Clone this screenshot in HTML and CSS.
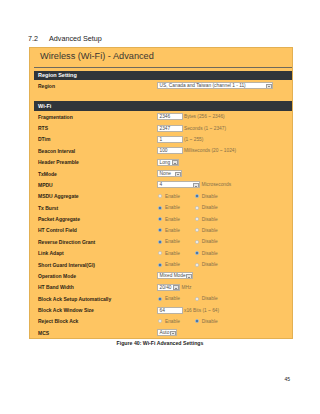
FILE: index.html
```html
<!DOCTYPE html>
<html lang="en">
<head>
    <meta charset="UTF-8">
    <meta name="viewport" content="width=device-width, initial-scale=1.0">
    <title>Advanced Setup</title>
    <link rel="stylesheet" href="styles.css">
</head>
<body>
    <div class="page">
        <h2 class="section"><span class="num">7.2</span>Advanced Setup</h2>

        <div class="panel">
            <div class="panel-title">Wireless (Wi-Fi) - Advanced</div>

            <!-- Region -->
            <div class="bar">Region Setting</div>
            <div class="row">
                <div class="label">Region</div>
                <div class="ctrl"><span class="select w-region">US, Canada and Taiwan (channel 1 - 11)<i class="arrow"></i></span></div>
            </div>

            <!-- Wi-Fi -->
            <div class="bar wifi">Wi-Fi</div>
            <div class="row">
                <div class="label">Fragmentation</div>
                <div class="ctrl"><span class="field">2346</span><span class="hint">Bytes (256 ~ 2346)</span></div>
            </div>
            <div class="row">
                <div class="label">RTS</div>
                <div class="ctrl"><span class="field">2347</span><span class="hint">Seconds (1 ~ 2347)</span></div>
            </div>
            <div class="row">
                <div class="label">DTim</div>
                <div class="ctrl"><span class="field">1</span><span class="hint">(1 ~ 255)</span></div>
            </div>
            <div class="row">
                <div class="label">Beacon Interval</div>
                <div class="ctrl"><span class="field">100</span><span class="hint">Milliseconds (20 ~ 1024)</span></div>
            </div>
            <div class="row">
                <div class="label">Header Preamble</div>
                <div class="ctrl"><span class="select w-long">Long<i class="arrow"></i></span></div>
            </div>
            <div class="row">
                <div class="label">TxMode</div>
                <div class="ctrl"><span class="select w-none">None<i class="arrow"></i></span></div>
            </div>
            <div class="row">
                <div class="label">MPDU</div>
                <div class="ctrl"><span class="select w-mpdu">4<i class="arrow"></i></span><span class="hint">Microseconds</span></div>
            </div>
            <div class="row">
                <div class="label">MSDU Aggregate</div>
                <div class="ctrl"><span class="opt"><i class="radio"></i>Enable</span><span class="opt"><i class="radio on"></i>Disable</span></div>
            </div>
            <div class="row">
                <div class="label">Tx Burst</div>
                <div class="ctrl"><span class="opt"><i class="radio on"></i>Enable</span><span class="opt"><i class="radio"></i>Disable</span></div>
            </div>
            <div class="row">
                <div class="label">Packet Aggregate</div>
                <div class="ctrl"><span class="opt"><i class="radio on"></i>Enable</span><span class="opt"><i class="radio"></i>Disable</span></div>
            </div>
            <div class="row">
                <div class="label">HT Control Field</div>
                <div class="ctrl"><span class="opt"><i class="radio on"></i>Enable</span><span class="opt"><i class="radio"></i>Disable</span></div>
            </div>
            <div class="row">
                <div class="label">Reverse Direction Grant</div>
                <div class="ctrl"><span class="opt"><i class="radio on"></i>Enable</span><span class="opt"><i class="radio"></i>Disable</span></div>
            </div>
            <div class="row">
                <div class="label">Link Adapt</div>
                <div class="ctrl"><span class="opt"><i class="radio"></i>Enable</span><span class="opt"><i class="radio on"></i>Disable</span></div>
            </div>
            <div class="row">
                <div class="label">Short Guard Interval(GI)</div>
                <div class="ctrl"><span class="opt"><i class="radio on"></i>Enable</span><span class="opt"><i class="radio"></i>Disable</span></div>
            </div>
            <div class="row">
                <div class="label">Operation Mode</div>
                <div class="ctrl"><span class="select w-mixed">Mixed Mode<i class="arrow"></i></span></div>
            </div>
            <div class="row">
                <div class="label">HT Band Width</div>
                <div class="ctrl"><span class="select w-band">20/40<i class="arrow"></i></span><span class="hint">MHz</span></div>
            </div>
            <div class="row">
                <div class="label">Block Ack Setup Automatically</div>
                <div class="ctrl"><span class="opt"><i class="radio on"></i>Enable</span><span class="opt"><i class="radio"></i>Disable</span></div>
            </div>
            <div class="row">
                <div class="label">Block Ack Window Size</div>
                <div class="ctrl"><span class="field">64</span><span class="hint">x16 Bits (1 ~ 64)</span></div>
            </div>
            <div class="row">
                <div class="label">Reject Block Ack</div>
                <div class="ctrl"><span class="opt"><i class="radio"></i>Enable</span><span class="opt"><i class="radio on"></i>Disable</span></div>
            </div>
            <div class="row">
                <div class="label">MCS</div>
                <div class="ctrl"><span class="select w-auto">Auto<i class="arrow"></i></span></div>
            </div>
        </div>

        <p class="caption">Figure 40: Wi-Fi Advanced Settings</p>
        <div class="page-num">45</div>
    </div>
</body>
</html>
```

FILE: styles.css
```css
body {
    margin: 0;
    padding: 0;
    background-color: #fff;
    font-family: "Liberation Sans", Arial, sans-serif;
}
.page {
    width: 320px;
    height: 414px;
    overflow: hidden;
    padding-top: 34px;
    box-sizing: border-box;
}
.section {
    margin: 0 0 0 28px;
    height: 9px;
    font-size: 7.2px;
    line-height: 9px;
    font-weight: normal;
    color: #222;
    display: flex;
}
.section .num {
    width: 21px;
}
.panel {
    margin: 4px 0 0 29px;
    width: 264px;
    box-sizing: border-box;
    background-color: #fec562;
    border: 1px solid #e3b052;
    padding: 0 0 0 4px;
}
.panel-title {
    height: 17px;
    line-height: 17px;
    padding: 0 0 2px 6px;
    font-size: 9.2px;
    color: #3a3631;
    border-bottom: 1px solid #6f6a5c;
}
.bar {
    margin-top: 3px;
    height: 9px;
    line-height: 9px;
    padding-left: 4px;
    background-color: #30353a;
    color: #fff;
    font-size: 5.5px;
    font-weight: bold;
}
.bar.wifi {
    margin-top: 9.6px;
    height: 10px;
    line-height: 10px;
}
.row {
    height: 11.38px;
    display: flex;
    align-items: center;
}
.label {
    width: 123px;
    flex: none;
    padding-left: 4px;
    box-sizing: border-box;
    font-size: 5px;
    font-weight: bold;
    color: #2d2415;
    white-space: nowrap;
}
.ctrl {
    display: flex;
    align-items: center;
    font-size: 4.8px;
    color: #86704a;
    white-space: nowrap;
}
.field, .select {
    display: block;
    height: 7px;
    box-sizing: border-box;
    background-color: #fff;
    border: 0.5px solid #b9b2a4;
    color: #4a4a4a;
    line-height: 6px;
    padding-left: 1.5px;
    overflow: hidden;
}
.field {
    width: 25.5px;
}
.select {
    position: relative;
    padding-right: 7px;
}
.arrow {
    position: absolute;
    top: 0.5px;
    right: 0.5px;
    width: 5.5px;
    height: 5px;
    background-color: #e6e6e6;
    border: 0.5px solid #9c9c9c;
    box-sizing: border-box;
}
.arrow::after {
    content: "";
    position: absolute;
    left: 1.2px;
    top: 1.6px;
    border-left: 1.3px solid transparent;
    border-right: 1.3px solid transparent;
    border-top: 1.6px solid #2a2a2a;
}
.w-region { width: 116px; }
.w-long { width: 22px; }
.w-none { width: 25px; }
.w-mpdu { width: 43px; }
.w-mixed { width: 36px; }
.w-band { width: 23px; }
.w-auto { width: 20px; }
.hint {
    margin-left: 1.5px;
}
.opt {
    width: 36.7px;
    display: flex;
    align-items: center;
}
.radio {
    width: 4px;
    height: 4px;
    margin: 0 3px 0 1px;
    border-radius: 50%;
    box-sizing: border-box;
    background-color: #fbfbfb;
    border: 0.5px solid #c9c2b2;
}
.radio.on {
    background-color: #2f5f8e;
    border: 0.8px solid #9fb7cf;
}
.caption {
    margin: 1px 0 0;
    height: 6px;
    line-height: 6px;
    text-align: center;
    font-size: 5.2px;
    font-weight: bold;
    color: #222;
}
.page-num {
    margin-top: 29.3px;
    height: 6px;
    line-height: 6px;
    padding-right: 30px;
    text-align: right;
    font-size: 5px;
    color: #222;
}
```
